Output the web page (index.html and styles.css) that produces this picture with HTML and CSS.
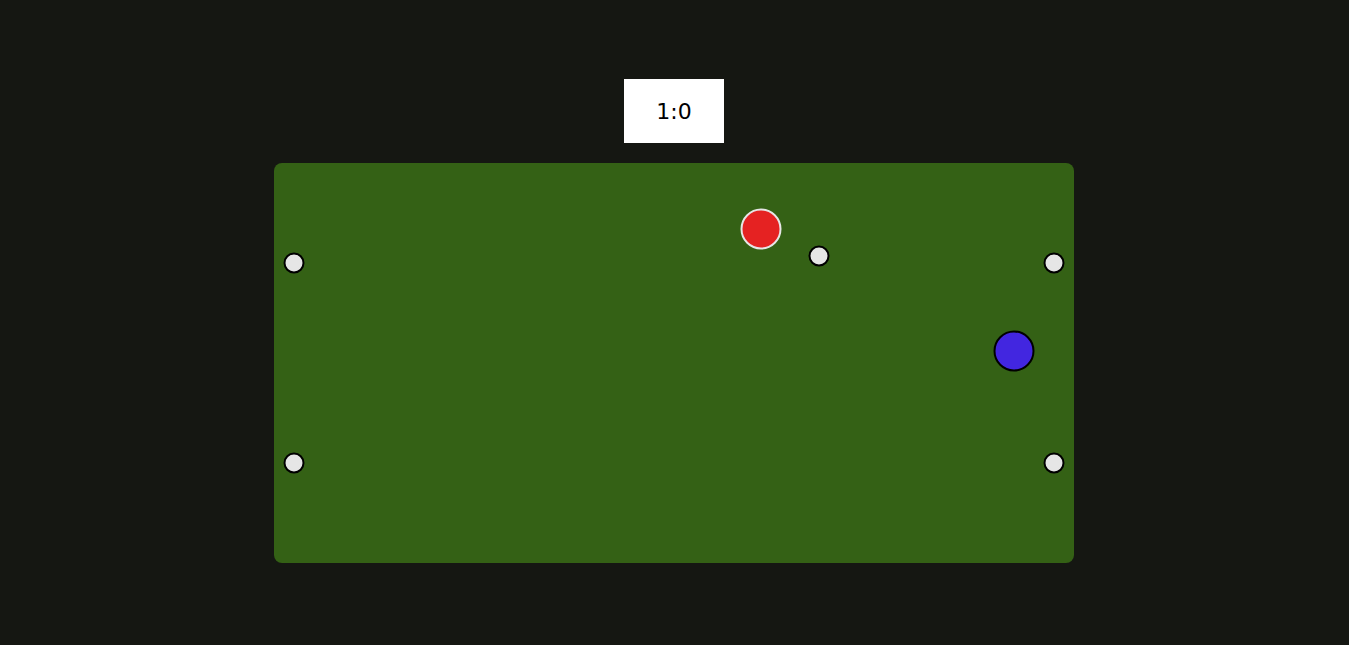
FILE: index.html
```html
<!DOCTYPE html>
<html>
<head>
<meta charset="utf-8">
<link rel="stylesheet" href="styles.css">
</head>
<body>
<div class="page">
  <div class="score">1:0</div>
  <div class="field">
    <div class="post post-tl"></div>
    <div class="post post-bl"></div>
    <div class="post post-tr"></div>
    <div class="post post-br"></div>
    <div class="ball"></div>
    <div class="player player-red"></div>
    <div class="player player-blue"></div>
  </div>
</div>
</body>
</html>
```
FILE: styles.css
```css
html, body {
  margin: 0;
  padding: 0;
  background: #151712;
}
.page {
  display: flex;
  flex-direction: column;
  align-items: center;
  padding-top: 79px;
  padding-right: 1px;
  gap: 20px;
}
.score {
  width: 100px;
  height: 64px;
  background: #ffffff;
  display: flex;
  align-items: center;
  justify-content: center;
  font-family: "DejaVu Sans", sans-serif;
  font-size: 22px;
  color: #000;
}
.field {
  position: relative;
  width: 800px;
  height: 400px;
  background: #346115;
  border-radius: 8px;
}
.post, .ball {
  position: absolute;
  width: 17px;
  height: 17px;
  border: 2px solid #000;
  border-radius: 50%;
  background: #e6e6e6;
  transform: translate(-50%, -50%);
}
.post-tl { left: 19.5px; top: 99.5px; }
.post-bl { left: 19.5px; top: 299.5px; }
.post-tr { left: 779.5px; top: 99.5px; }
.post-br { left: 779.5px; top: 299.5px; }
.ball { left: 545px; top: 92.5px; }
.player {
  position: absolute;
  width: 37px;
  height: 37px;
  border-radius: 50%;
  transform: translate(-50%, -50%);
}
.player-red {
  left: 486.5px;
  top: 65.5px;
  background: #e52222;
  border: 2px solid #e6e6e6;
}
.player-blue {
  left: 739.5px;
  top: 188px;
  background: #4226e0;
  border: 2px solid #000;
}
```
